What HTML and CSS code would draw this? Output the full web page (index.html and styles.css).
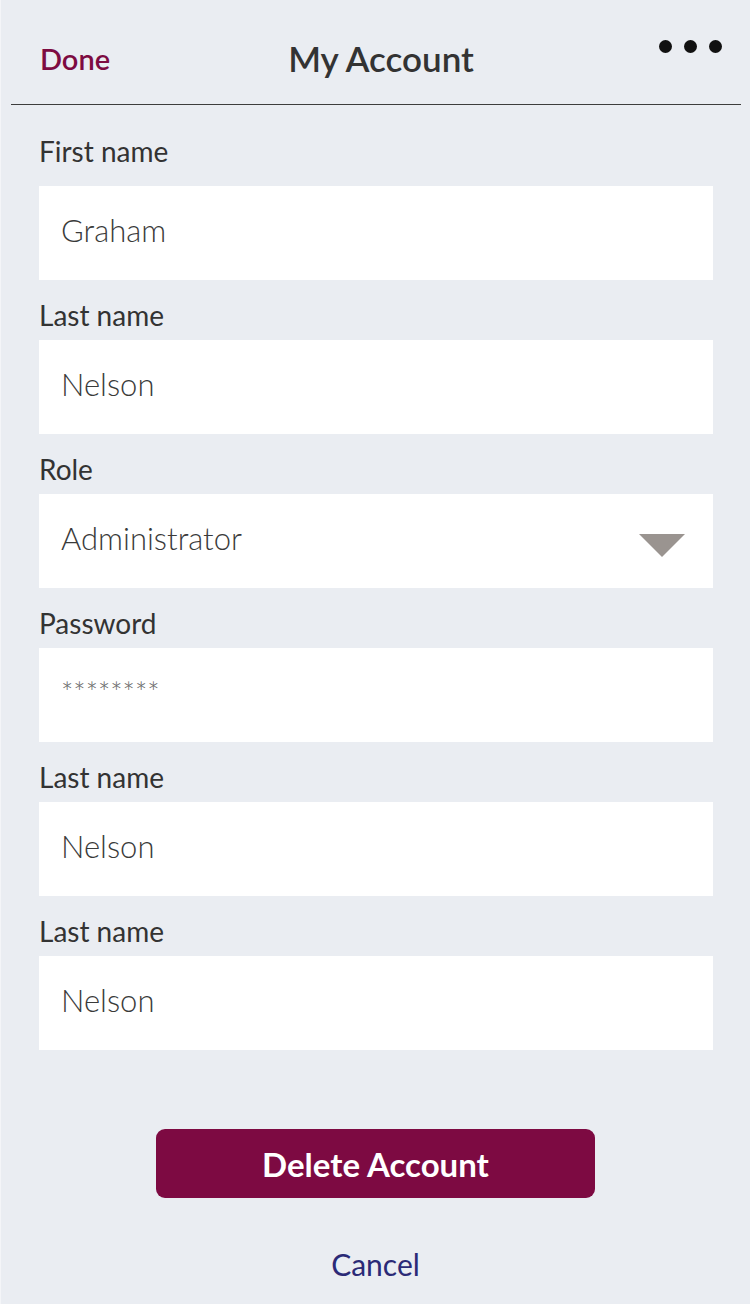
FILE: index.html
```html
<!DOCTYPE html>
<html lang="en">
<head>
<meta charset="utf-8">
<title>My Account</title>
<link rel="stylesheet" href="styles.css">
</head>
<body>
<div class="screen">
  <header class="topbar">
    <span class="done">Done</span>
    <h1 class="title">My Account</h1>
    <span class="more" aria-label="More"><i></i><i></i><i></i></span>
  </header>
  <main class="form">
    <div class="field first">
      <div class="label">First name</div>
      <div class="input">Graham</div>
    </div>
    <div class="field">
      <div class="label">Last name</div>
      <div class="input">Nelson</div>
    </div>
    <div class="field">
      <div class="label">Role</div>
      <div class="input select">Administrator<span class="caret"></span></div>
    </div>
    <div class="field">
      <div class="label">Password</div>
      <div class="input password">********</div>
    </div>
    <div class="field">
      <div class="label">Last name</div>
      <div class="input">Nelson</div>
    </div>
    <div class="field">
      <div class="label">Last name</div>
      <div class="input">Nelson</div>
    </div>
  </main>
  <div class="actions">
    <button class="delete">Delete Account</button>
    <span class="cancel">Cancel</span>
  </div>
</div>
</body>
</html>
```
FILE: styles.css
```css
html, body {
  margin: 0;
  padding: 0;
  background: #eaedf2;
}
body {
  font-family: "Lato", "Liberation Sans", sans-serif;
  color: #333;
}
.screen {
  width: 750px;
  height: 1304px;
  box-sizing: border-box;
  border-left: 1px solid #f4f5f8;
  display: flex;
  flex-direction: column;
}
.topbar {
  height: 104px;
  margin: 0 9px 0 10px;
  border-bottom: 1px solid #3d3d3d;
  display: grid;
  grid-template-columns: 1fr auto 1fr;
  align-items: center;
  padding: 0 19px 0 29px;
}
.done {
  font-size: 29px;
  font-weight: 600;
  color: #7d0b41;
  padding-top: 12px;
}
.title {
  margin: 0;
  font-size: 35px;
  font-weight: 600;
  color: #333;
  padding-top: 12px;
}
.more {
  justify-self: end;
  display: flex;
  gap: 12px;
  align-self: start;
  margin-top: 40px;
}
.more i {
  width: 13px;
  height: 13px;
  border-radius: 50%;
  background: #111;
}
.form {
  padding: 31px 37px 0 38px;
  display: flex;
  flex-direction: column;
  gap: 20px;
}
.label {
  font-size: 28px;
  line-height: 30px;
  height: 30px;
  margin-bottom: 10px;
  color: #333;
}
.field.first .label {
  margin-bottom: 20px;
}
.input {
  height: 94px;
  background: #fff;
  display: flex;
  align-items: center;
  padding: 0 22px 6px;
  box-sizing: border-box;
  font-size: 31px;
  font-weight: 300;
  color: #3a3a3a;
}
.select {
  justify-content: space-between;
  padding-right: 28px;
}
.caret {
  width: 0;
  height: 0;
  border-left: 23px solid transparent;
  border-right: 23px solid transparent;
  border-top: 23px solid #9a9490;
  margin-top: 15px;
}
.password {
  font-size: 29px;
  color: #666;
  align-items: flex-start;
  padding-top: 26px;
}
.actions {
  margin-top: 79px;
  display: flex;
  flex-direction: column;
  align-items: center;
}
.delete {
  width: 439px;
  height: 69px;
  border: 0;
  border-radius: 9px;
  background: #7d0a42;
  color: #fff;
  font-family: "Lato", "Liberation Sans", sans-serif;
  font-weight: 700;
  font-size: 33px;
  padding: 0;
}
.cancel {
  margin-top: 48px;
  font-size: 30px;
  color: #2b2a77;
}
```
